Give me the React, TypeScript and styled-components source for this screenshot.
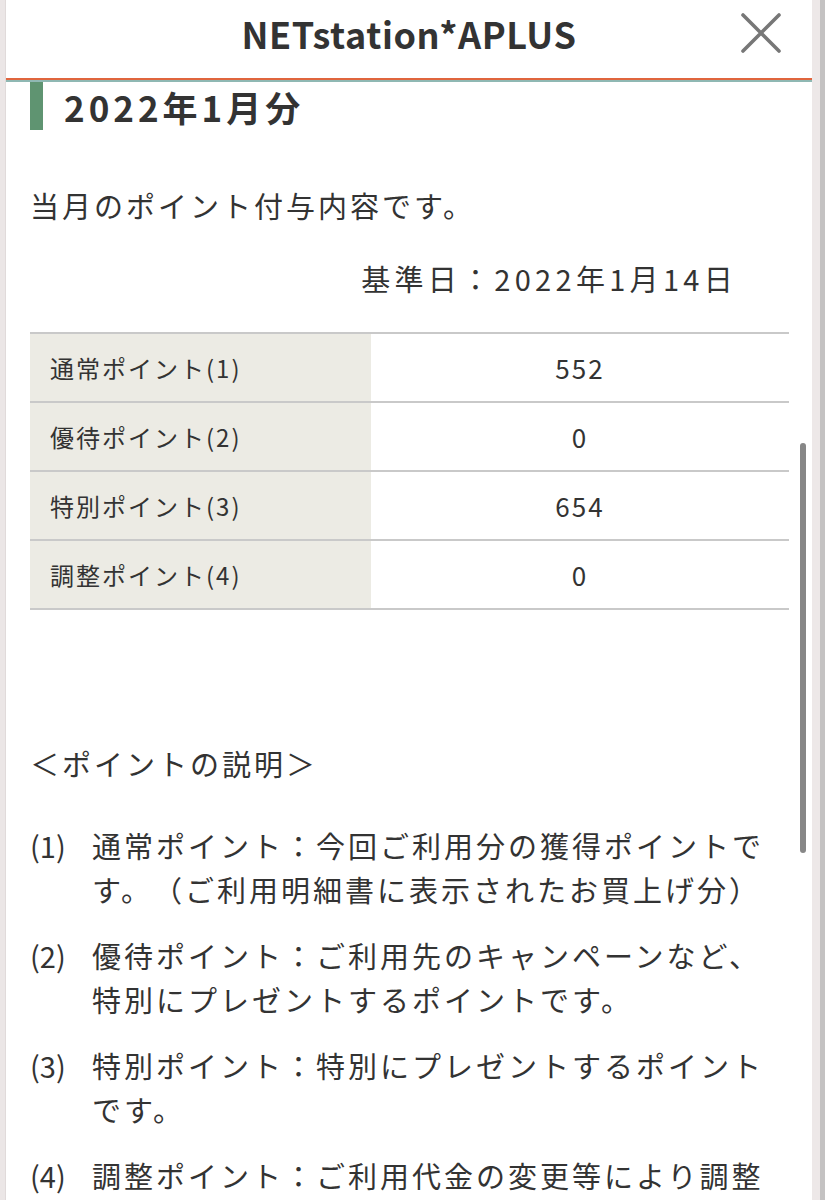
import React from "react";
import styled, { createGlobalStyle } from "styled-components";

const Global = createGlobalStyle`
  html, body { margin: 0; padding: 0; background: #ece7e7; }
  body {
    font-family: "Noto Sans CJK JP", "Noto Sans", sans-serif;
    color: #333;
    text-spacing-trim: space-all;
  }
  * { box-sizing: border-box; }
`;

const Page = styled.div`
  display: flex;
  width: 825px;
  height: 1200px;
  overflow: hidden;
`;

const LeftStrip = styled.div`
  width: 6px;
  flex: none;
  background: #ebe6e6;
  border-right: 1px solid #e0dada;
`;

const RightStrip = styled.div`
  width: 13px;
  flex: none;
  display: flex;
`;

const StripLight = styled.div`
  width: 8px;
  background: #ede8e8;
`;

const StripDark = styled.div`
  width: 5px;
  background: #c4c2c2;
`;

const Modal = styled.div`
  position: relative;
  flex: 1;
  background: #fff;
  display: flex;
  flex-direction: column;
`;

const Header = styled.header`
  height: 82px;
  flex: none;
  display: grid;
  grid-template-columns: 1fr auto 1fr;
  align-items: center;
  padding-bottom: 14px;
  border-bottom: 2px solid #8fb8b3;
  box-shadow: inset 0 -2px 0 #e0653e;
`;

const Title = styled.h1`
  grid-column: 2;
  margin: 0;
  font-size: 36px;
  font-weight: 700;
  letter-spacing: 0.6px;
  color: #333;
  line-height: 1;
`;

const CloseButton = styled.button`
  grid-column: 3;
  justify-self: end;
  margin-right: 30px;
  width: 42px;
  height: 42px;
  padding: 0;
  border: none;
  background: transparent;
  display: flex;
  align-items: center;
  justify-content: center;
`;

const Content = styled.main`
  padding: 0 23px 0 24px;
  display: flex;
  flex-direction: column;
`;

const SectionHeading = styled.h2`
  margin: 0;
  height: 48px;
  display: flex;
  align-items: center;
  gap: 21px;
  font-size: 35px;
  font-weight: 700;
  letter-spacing: 4px;
  color: #333;
  &::before {
    content: "";
    width: 13px;
    height: 48px;
    background: #5f9471;
  }
`;

const Paragraph = styled.p<{ $align?: string; $top: number; $pr?: number; $ls?: number }>`
  margin: ${(p) => p.$top}px 0 0;
  padding-right: ${(p) => p.$pr ?? 0}px;
  font-size: 29px;
  letter-spacing: ${(p) => p.$ls ?? 3}px;
  line-height: 44px;
  text-align: ${(p) => p.$align ?? "left"};
  color: #333;
`;

const Table = styled.div`
  margin-top: 32px;
  border-bottom: 2px solid #c9c9c9;
`;

const Row = styled.div`
  display: grid;
  grid-template-columns: 341px 1fr;
  height: 69px;
  border-top: 2px solid #c9c9c9;
`;

const Label = styled.div`
  background: #ecebe4;
  display: flex;
  align-items: center;
  padding-left: 20px;
  font-size: 24px;
  letter-spacing: 2px;
  color: #333;
`;

const Value = styled.div`
  display: flex;
  align-items: center;
  justify-content: center;
  font-size: 26px;
  letter-spacing: 2px;
  color: #333;
`;

const List = styled.ol`
  list-style: none;
  margin: 38px 0 0;
  padding: 0;
  display: flex;
  flex-direction: column;
  gap: 22px;
`;

const Item = styled.li`
  display: grid;
  grid-template-columns: 62px 1fr;
  font-size: 29px;
  letter-spacing: 3px;
  line-height: 44px;
  color: #333;
`;

const Num = styled.span`
  letter-spacing: 0;
`;

const Scrollbar = styled.div`
  position: absolute;
  top: 443px;
  right: 6px;
  width: 6px;
  height: 410px;
  border-radius: 3px;
  background: #878787;
`;

const rows = [
  { label: "通常ポイント(1)", value: "552" },
  { label: "優待ポイント(2)", value: "0" },
  { label: "特別ポイント(3)", value: "654" },
  { label: "調整ポイント(4)", value: "0" },
];

const notes = [
  { n: "(1)", t: "通常ポイント：今回ご利用分の獲得ポイントです。（ご利用明細書に表示されたお買上げ分）" },
  { n: "(2)", t: "優待ポイント：ご利用先のキャンペーンなど、特別にプレゼントするポイントです。" },
  { n: "(3)", t: "特別ポイント：特別にプレゼントするポイントです。" },
  { n: "(4)", t: "調整ポイント：ご利用代金の変更等により調整したポイントです。" },
];

export default function App() {
  return (
    <>
      <Global />
      <Page>
        <LeftStrip />
        <Modal>
          <Header>
            <Title>NETstation*APLUS</Title>
            <CloseButton aria-label="閉じる">
              <svg width="40" height="40" viewBox="0 0 40 40">
                <path d="M2 2 L38 38 M38 2 L2 38" stroke="#777" strokeWidth="3.6" strokeLinecap="round" />
              </svg>
            </CloseButton>
          </Header>
          <Content>
            <SectionHeading>2022年1月分</SectionHeading>
            <Paragraph $top={53}>当月のポイント付与内容です。</Paragraph>
            <Paragraph $top={29} $align="right" $pr={52} $ls={4.3}>基準日：2022年1月14日</Paragraph>
            <Table>
              {rows.map((r) => (
                <Row key={r.label}>
                  <Label>{r.label}</Label>
                  <Value>{r.value}</Value>
                </Row>
              ))}
            </Table>
            <Paragraph $top={131}>＜ポイントの説明＞</Paragraph>
            <List>
              {notes.map((n) => (
                <Item key={n.n}>
                  <Num>{n.n}</Num>
                  <span>{n.t}</span>
                </Item>
              ))}
            </List>
          </Content>
          <Scrollbar />
        </Modal>
        <RightStrip>
          <StripLight />
          <StripDark />
        </RightStrip>
      </Page>
    </>
  );
}
